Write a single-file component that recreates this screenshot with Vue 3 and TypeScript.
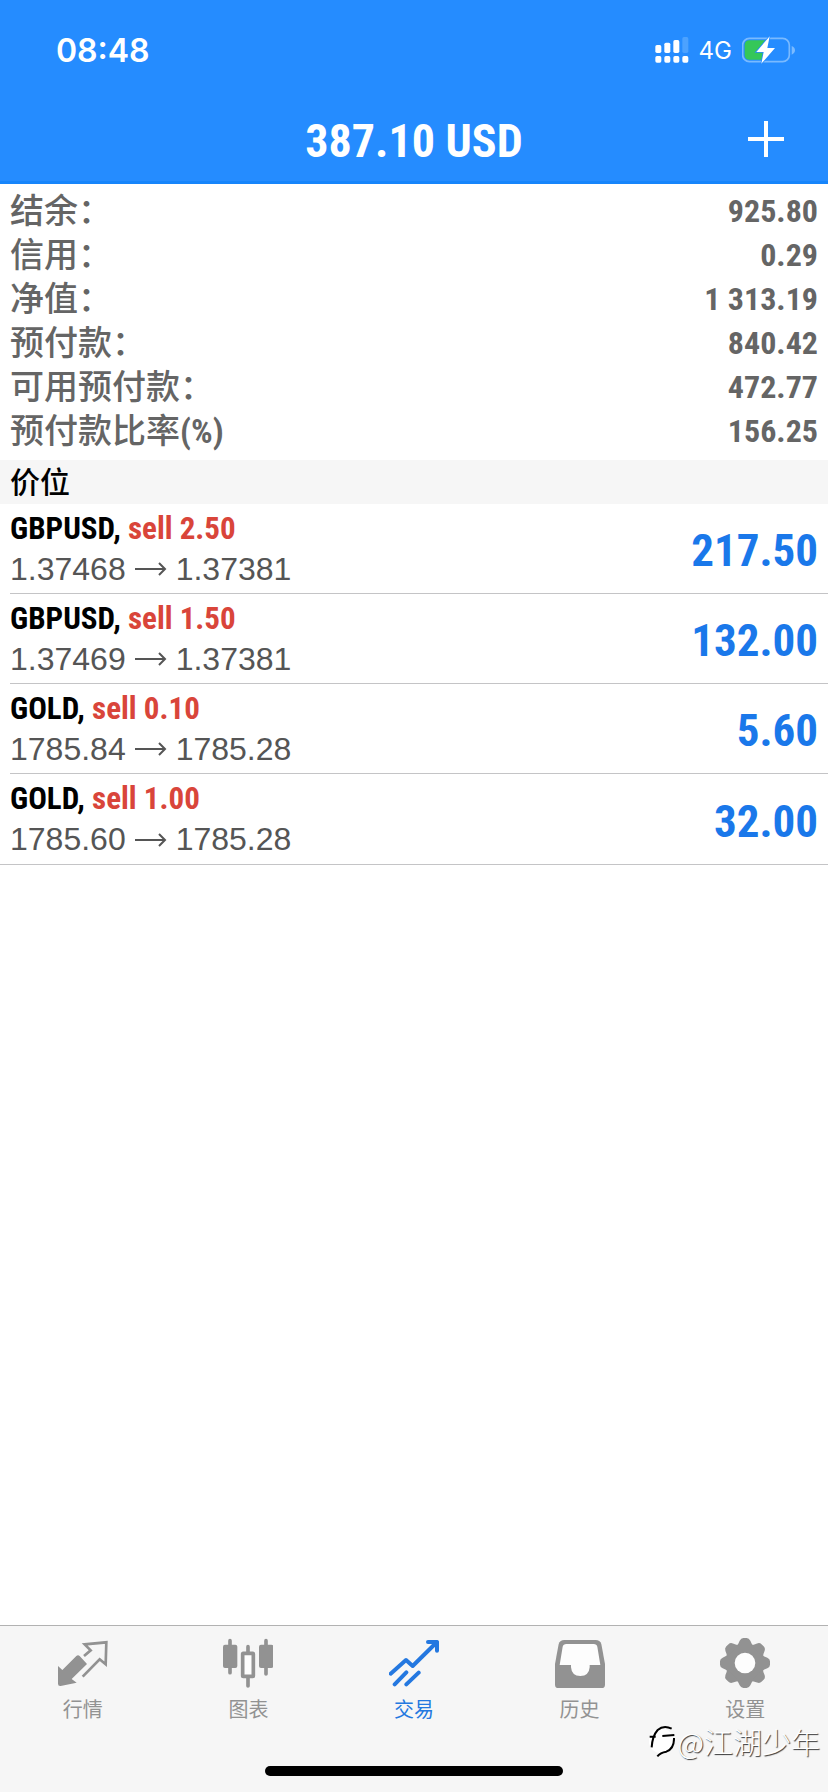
<script setup lang="ts">
interface SummaryRow {
  label: string
  unit?: string
  value: string
}

interface Position {
  id: number
  symbol: string
  side: string
  open: string
  current: string
  profit: string
}

interface Tab {
  key: string
  label: string
}

const total = '387.10 USD'

const summary: SummaryRow[] = [
  { label: '结余：', value: '925.80' },
  { label: '信用：', value: '0.29' },
  { label: '净值：', value: '1 313.19' },
  { label: '预付款：', value: '840.42' },
  { label: '可用预付款：', value: '472.77' },
  { label: '预付款比率', unit: '(%)', value: '156.25' },
]

const positions: Position[] = [
  { id: 1, symbol: 'GBPUSD', side: 'sell 2.50', open: '1.37468', current: '1.37381', profit: '217.50' },
  { id: 2, symbol: 'GBPUSD', side: 'sell 1.50', open: '1.37469', current: '1.37381', profit: '132.00' },
  { id: 3, symbol: 'GOLD', side: 'sell 0.10', open: '1785.84', current: '1785.28', profit: '5.60' },
  { id: 4, symbol: 'GOLD', side: 'sell 1.00', open: '1785.60', current: '1785.28', profit: '32.00' },
]

const tabs: Tab[] = [
  { key: 'quotes', label: '行情' },
  { key: 'charts', label: '图表' },
  { key: 'trade', label: '交易' },
  { key: 'history', label: '历史' },
  { key: 'settings', label: '设置' },
]

const activeTab = 'trade'
const teeth = [0, 45, 90, 135, 180, 225, 270, 315]
</script>

<template>
  <div class="screen">
    <header class="header">
      <div class="status">
        <span class="time">08:48</span>
        <div class="indicators">
          <svg class="signal" viewBox="0 0 100 78" aria-hidden="true">
            <g fill="#fff">
              <rect x="0" y="24" width="18" height="24" rx="5" />
              <rect x="27" y="17" width="18" height="31" rx="5" />
              <rect x="54" y="9" width="18" height="39" rx="5" />
              <rect x="0" y="57" width="18" height="20" rx="5" />
              <rect x="27" y="57" width="18" height="20" rx="5" />
              <rect x="54" y="57" width="18" height="20" rx="5" />
              <rect x="81" y="57" width="18" height="20" rx="5" />
            </g>
            <rect x="81" y="0" width="18" height="48" rx="5" fill="#4ca2ff" />
          </svg>
          <span class="network">4G</span>
          <svg class="battery" viewBox="0 0 159 84" aria-hidden="true">
            <rect x="2" y="7" width="140" height="70" rx="20" fill="none" stroke="#7abaff" stroke-width="5" />
            <path d="M23 13H70V71H23Q8 71 8 56V28Q8 13 23 13Z" fill="#35c759" />
            <path d="M149 30Q159 34 159 43T149 56Z" fill="#7abaff" />
            <path d="M83 1 43 48H65L58 83 99 36H76Z" fill="#fff" stroke="#258cff" stroke-width="5" paint-order="stroke" />
          </svg>
        </div>
      </div>
      <div class="titlebar">
        <h1 class="total">{{ total }}</h1>
        <button class="add" type="button" aria-label="新建订单">
          <svg viewBox="0 0 36 36" aria-hidden="true">
            <path d="M18 0V36M0 18H36" stroke="#fff" stroke-width="4" />
          </svg>
        </button>
      </div>
    </header>

    <main class="content">
      <dl class="summary">
        <div v-for="row in summary" :key="row.label" class="summary-row">
          <dt>{{ row.label }}<span v-if="row.unit" class="unit">{{ row.unit }}</span></dt>
          <dd>{{ row.value }}</dd>
        </div>
      </dl>

      <h2 class="section">价位</h2>

      <ul class="positions">
        <li v-for="p in positions" :key="p.id" class="position">
          <div class="detail">
            <div class="order">{{ p.symbol }}, <span class="side">{{ p.side }}</span></div>
            <div class="prices">
              <span>{{ p.open }}</span>
              <svg class="arrow" viewBox="0 0 32 14" role="img" aria-label="→">
                <path d="M0 7H30M24 1 30 7 24 13" fill="none" stroke="currentColor" stroke-width="2" />
              </svg>
              <span>{{ p.current }}</span>
            </div>
          </div>
          <div class="profit">{{ p.profit }}</div>
        </li>
      </ul>
    </main>

    <footer class="footer">
      <nav class="tabs">
        <button
          v-for="tab in tabs"
          :key="tab.key"
          type="button"
          class="tab"
          :class="{ active: tab.key === activeTab }"
        >
          <svg v-if="tab.key === 'quotes'" class="icon" viewBox="171 84 150 150" aria-hidden="true">
            <path d="M249 138 269 121 251 103 316 97 314 163 296 148 245 200" fill="none" stroke="currentColor" stroke-width="8" />
            <path d="M171 168 184 180 226 138Q231 133 236 138L258 162 212 207 227 218 179 228Q171 229 171 221Z" fill="currentColor" />
          </svg>
          <svg v-else-if="tab.key === 'charts'" class="icon" viewBox="669 84 150 150" aria-hidden="true">
            <path d="M690 92V188M798 92V192M744 110V130M744 200V228" stroke="currentColor" stroke-width="11" stroke-linecap="round" />
            <rect x="669" y="104" width="43" height="70" rx="6" fill="currentColor" />
            <rect x="777" y="104" width="43" height="70" rx="6" fill="currentColor" />
            <rect x="728" y="130" width="32" height="69" rx="2" fill="#fdfdfd" stroke="currentColor" stroke-width="11" />
          </svg>
          <svg v-else-if="tab.key === 'trade'" class="icon" viewBox="264 84 150 150" aria-hidden="true">
            <path
              d="M269 191 315 150 335 168 408 96M381 96H408V122M281 223 316 187M316 223 353 188"
              fill="none"
              stroke="currentColor"
              stroke-width="12"
              stroke-linecap="round"
              stroke-linejoin="round"
            />
          </svg>
          <svg v-else-if="tab.key === 'history'" class="icon" viewBox="99 84 150 150" aria-hidden="true">
            <path d="M127 90H221Q234 90 238 102L249 162V224Q249 234 239 234H109Q99 234 99 224V162L110 102Q114 90 127 90Z" fill="currentColor" />
            <path d="M133 102H215Q224 102 226 110L235 165H203V172Q201 198 175 198T147 172V165H113L122 110Q124 102 133 102Z" fill="#fdfdfd" />
          </svg>
          <svg v-else class="icon" viewBox="597 87 150 150" aria-hidden="true">
            <circle cx="672" cy="162" r="57" fill="currentColor" />
            <path
              v-for="angle in teeth"
              :key="angle"
              d="M646 112Q652 106 656 95Q660 87 667 87H677Q684 87 688 95Q692 106 698 112Z"
              fill="currentColor"
              :transform="`rotate(${angle} 672 162)`"
            />
            <circle cx="672" cy="162" r="31" fill="#fdfdfd" />
          </svg>
          <span class="tab-label">{{ tab.label }}</span>
        </button>
      </nav>
      <div class="home-indicator"></div>
      <div class="watermark">
        <svg class="mark" viewBox="0 0 78 102" aria-hidden="true">
          <circle cx="36" cy="50" r="37" fill="#fff" />
          <path d="M2 38H20M40 36 76 33M8 70Q10 36 26 18Q44 2 68 14M75 42Q76 74 52 83Q34 86 25 97" fill="none" stroke="#000" stroke-width="6" />
        </svg>
        <span>@江湖少年</span>
      </div>
    </footer>
  </div>
</template>

<style>
body {
  margin: 0;
  background: #fff;
}
</style>

<style scoped>
.screen {
  display: flex;
  flex-direction: column;
  min-height: 100vh;
  font-family: "Roboto Condensed", "Liberation Sans", "Noto Sans CJK SC", sans-serif;
  color: #000;
}

.header {
  box-sizing: border-box;
  background: #258cff;
  border-bottom: 3px solid #1785fb;
  color: #fff;
}

.status {
  display: flex;
  align-items: center;
  justify-content: space-between;
  height: 100px;
  padding: 0 33px 0 56px;
  font-family: Inter, sans-serif;
}

.time {
  font-size: 32px;
  font-weight: 600;
}

.indicators {
  display: flex;
  align-items: center;
}

.signal {
  width: 34px;
  height: 26px;
}

.network {
  margin: 0 10px;
  font-size: 24px;
}

.battery {
  width: 53px;
  height: 28px;
}

.titlebar {
  display: grid;
  grid-template-columns: 1fr auto 1fr;
  align-items: center;
  height: 78px;
  padding: 0 44px 3px;
}

.total {
  grid-column: 2;
  margin: 0;
  padding-top: 4px;
  font-size: 46px;
  line-height: 74px;
  font-weight: 700;
}

.add {
  justify-self: end;
  display: flex;
  padding: 0;
  border: 0;
  background: none;
}

.add svg {
  width: 36px;
  height: 36px;
}

.summary {
  margin: 0;
  padding: 5px 10px 7px;
  color: #656565;
}

.summary-row {
  display: flex;
  justify-content: space-between;
  font-size: 34px;
  line-height: 44px;
}

.summary-row dt {
  font-weight: 500;
}

.summary-row dd {
  margin: 0;
  font-size: 32px;
  font-weight: 700;
}

.unit {
  font-weight: 700;
}

.section {
  margin: 0;
  padding: 2px 10px 0;
  background: #f6f6f6;
  font-size: 30px;
  line-height: 42px;
  font-weight: 500;
}

.positions {
  margin: 0;
  padding: 0;
  list-style: none;
  border-bottom: 1px solid #c4c4c6;
}

.position {
  display: flex;
  align-items: center;
  justify-content: space-between;
  box-sizing: border-box;
  height: 90px;
  margin-left: 10px;
  padding-right: 10px;
  border-bottom: 1px solid #c4c4c6;
}

.position:last-child {
  border-bottom: 0;
}

.order {
  font-size: 31px;
  line-height: 41px;
  font-weight: 700;
}

.side {
  color: #d9453a;
}

.prices {
  display: flex;
  align-items: center;
  gap: 9px;
  font-family: "Liberation Sans", sans-serif;
  font-size: 32px;
  line-height: 41px;
  color: #555;
}

.arrow {
  width: 32px;
  height: 14px;
}

.profit {
  padding-top: 4px;
  font-size: 45px;
  font-weight: 700;
  color: #1a78ea;
}

.footer {
  position: relative;
  margin-top: auto;
  padding-bottom: 16px;
  background: #f6f6f6;
  border-top: 1px solid #b2b2b2;
}

.tabs {
  display: grid;
  grid-template-columns: repeat(5, 1fr);
  padding: 12px 0 44px;
}

.tab {
  display: flex;
  flex-direction: column;
  align-items: center;
  gap: 8px;
  padding: 0;
  border: 0;
  background: none;
  color: #929292;
  font-family: "Noto Sans CJK SC", sans-serif;
  font-size: 20px;
  line-height: 26px;
}

.tab.active {
  color: #2478e0;
}

.icon {
  width: 50px;
  height: 50px;
}

.home-indicator {
  width: 36%;
  height: 10px;
  margin: 0 auto;
  border-radius: 5px;
  background: #000;
}

.watermark {
  position: absolute;
  right: 8px;
  bottom: 31px;
  display: flex;
  align-items: center;
  gap: 3px;
  font-family: "Noto Sans CJK SC", sans-serif;
  font-size: 29px;
  line-height: 40px;
  font-weight: 300;
  color: #fff;
  text-shadow: 1px 1px 1px #333;
}

.mark {
  width: 26px;
  height: 34px;
}
</style>
